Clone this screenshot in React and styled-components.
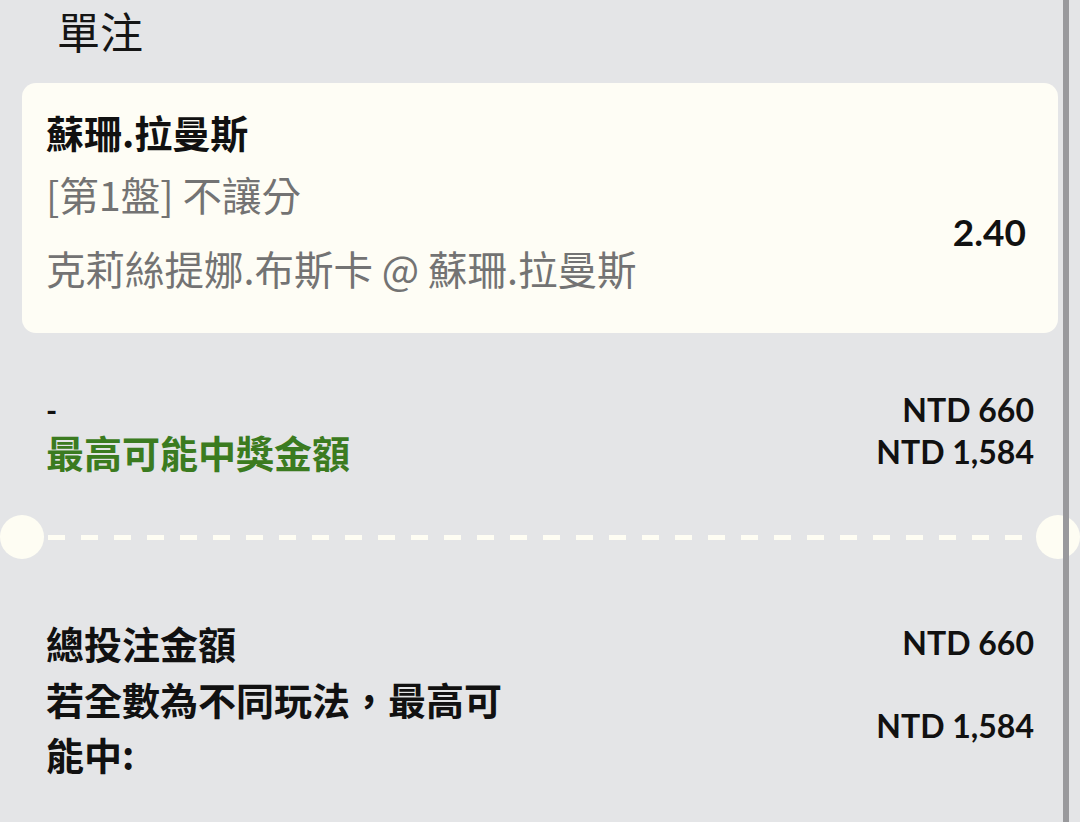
import React from "react";
import styled, { createGlobalStyle } from "styled-components";

const GlobalStyle = createGlobalStyle`
  html, body {
    margin: 0;
    padding: 0;
    background: #e4e5e7;
  }
  body {
    font-family: "Lato", "Noto Sans CJK TC", sans-serif;
    color: #111;
  }
`;

const Page = styled.div`
  position: relative;
  width: 1080px;
  height: 822px;
  overflow: hidden;
  background: #e4e5e7;
`;

// scrollbar track on the right edge, sits over the content
const ScrollBar = styled.div`
  position: absolute;
  top: 0;
  bottom: 0;
  left: 1063px;
  width: 6px;
  background: #99999c;
`;

const Title = styled.h1`
  margin: 0;
  padding: 0 0 0 57px;
  height: 83px;
  box-sizing: border-box;
  font-family: "Noto Sans CJK TC", sans-serif;
  font-size: 43px;
  font-weight: 400;
  line-height: 60px;
  color: #151515;
`;

const Card = styled.div`
  margin: 0 22px;
  height: 250px;
  box-sizing: border-box;
  padding: 23px 32px 0 24px;
  background: #fefdf5;
  border-radius: 14px;
`;

const Name = styled.div`
  font-family: "Noto Sans CJK TC", sans-serif;
  font-size: 38px;
  font-weight: 700;
  line-height: 52px;
  color: #111;
`;

const CardBody = styled.div`
  display: flex;
  align-items: center;
  justify-content: space-between;
  margin-top: 10px;
`;

const Lines = styled.div`
  display: flex;
  flex-direction: column;
  gap: 22px;
`;

const Muted = styled.div`
  font-family: "Noto Sans CJK TC", sans-serif;
  font-size: 39.5px;
  line-height: 52px;
  color: #737373;
`;

const Odds = styled.div`
  font-size: 37px;
  font-weight: 700;
  line-height: 52px;
  padding-top: 2px;
`;

const Summary = styled.div`
  padding: 59px 46px 0;
  height: 182px;
  box-sizing: border-box;
`;

const Row = styled.div`
  display: flex;
  justify-content: space-between;
  align-items: center;
`;

const Dash = styled.div`
  font-size: 30px;
  font-weight: 700;
  line-height: 36px;
`;

const Label = styled.div`
  font-family: "Noto Sans CJK TC", sans-serif;
  font-size: 38px;
  font-weight: 700;
  line-height: ${(p) => (p.$wrap ? "55px" : p.$green ? "48px" : "52px")};
  color: ${(p) => (p.$green ? "#3b7b20" : "#111")};
  max-width: ${(p) => (p.$wrap ? "480px" : "none")};
`;

const Amount = styled.div`
  font-size: 32px;
  font-weight: 700;
  line-height: ${(p) => (p.$tight ? "36px" : "48px")};
  text-align: right;
`;

const Divider = styled.div`
  display: flex;
  align-items: center;
  height: 44px;
`;

const Notch = styled.div`
  flex: 0 0 44px;
  height: 44px;
  border-radius: 50%;
  background: #fefdf3;
`;

const Dashes = styled.div`
  flex: 1;
  height: 5px;
  margin: 0 4px;
  background: repeating-linear-gradient(
    to right,
    #fefdf3 0 17px,
    transparent 17px 33px
  );
`;

const Totals = styled.div`
  padding: 58px 46px 0;
  display: flex;
  flex-direction: column;
  gap: 2px;
`;

export default function App() {
  return (
    <>
      <GlobalStyle />
      <Page>
        <Title>單注</Title>
        <Card>
          <Name>蘇珊.拉曼斯</Name>
          <CardBody>
            <Lines>
              <Muted>[第1盤] 不讓分</Muted>
              <Muted>克莉絲提娜.布斯卡 @ 蘇珊.拉曼斯</Muted>
            </Lines>
            <Odds>2.40</Odds>
          </CardBody>
        </Card>
        <Summary>
          <Row>
            <Dash>-</Dash>
            <Amount $tight>NTD 660</Amount>
          </Row>
          <Row>
            <Label $green>最高可能中獎金額</Label>
            <Amount>NTD 1,584</Amount>
          </Row>
        </Summary>
        <Divider>
          <Notch />
          <Dashes />
          <Notch />
        </Divider>
        <Totals>
          <Row>
            <Label>總投注金額</Label>
            <Amount>NTD 660</Amount>
          </Row>
          <Row>
            <Label $wrap>若全數為不同玩法，最高可能中:</Label>
            <Amount>NTD 1,584</Amount>
          </Row>
        </Totals>
        <ScrollBar />
      </Page>
    </>
  );
}
